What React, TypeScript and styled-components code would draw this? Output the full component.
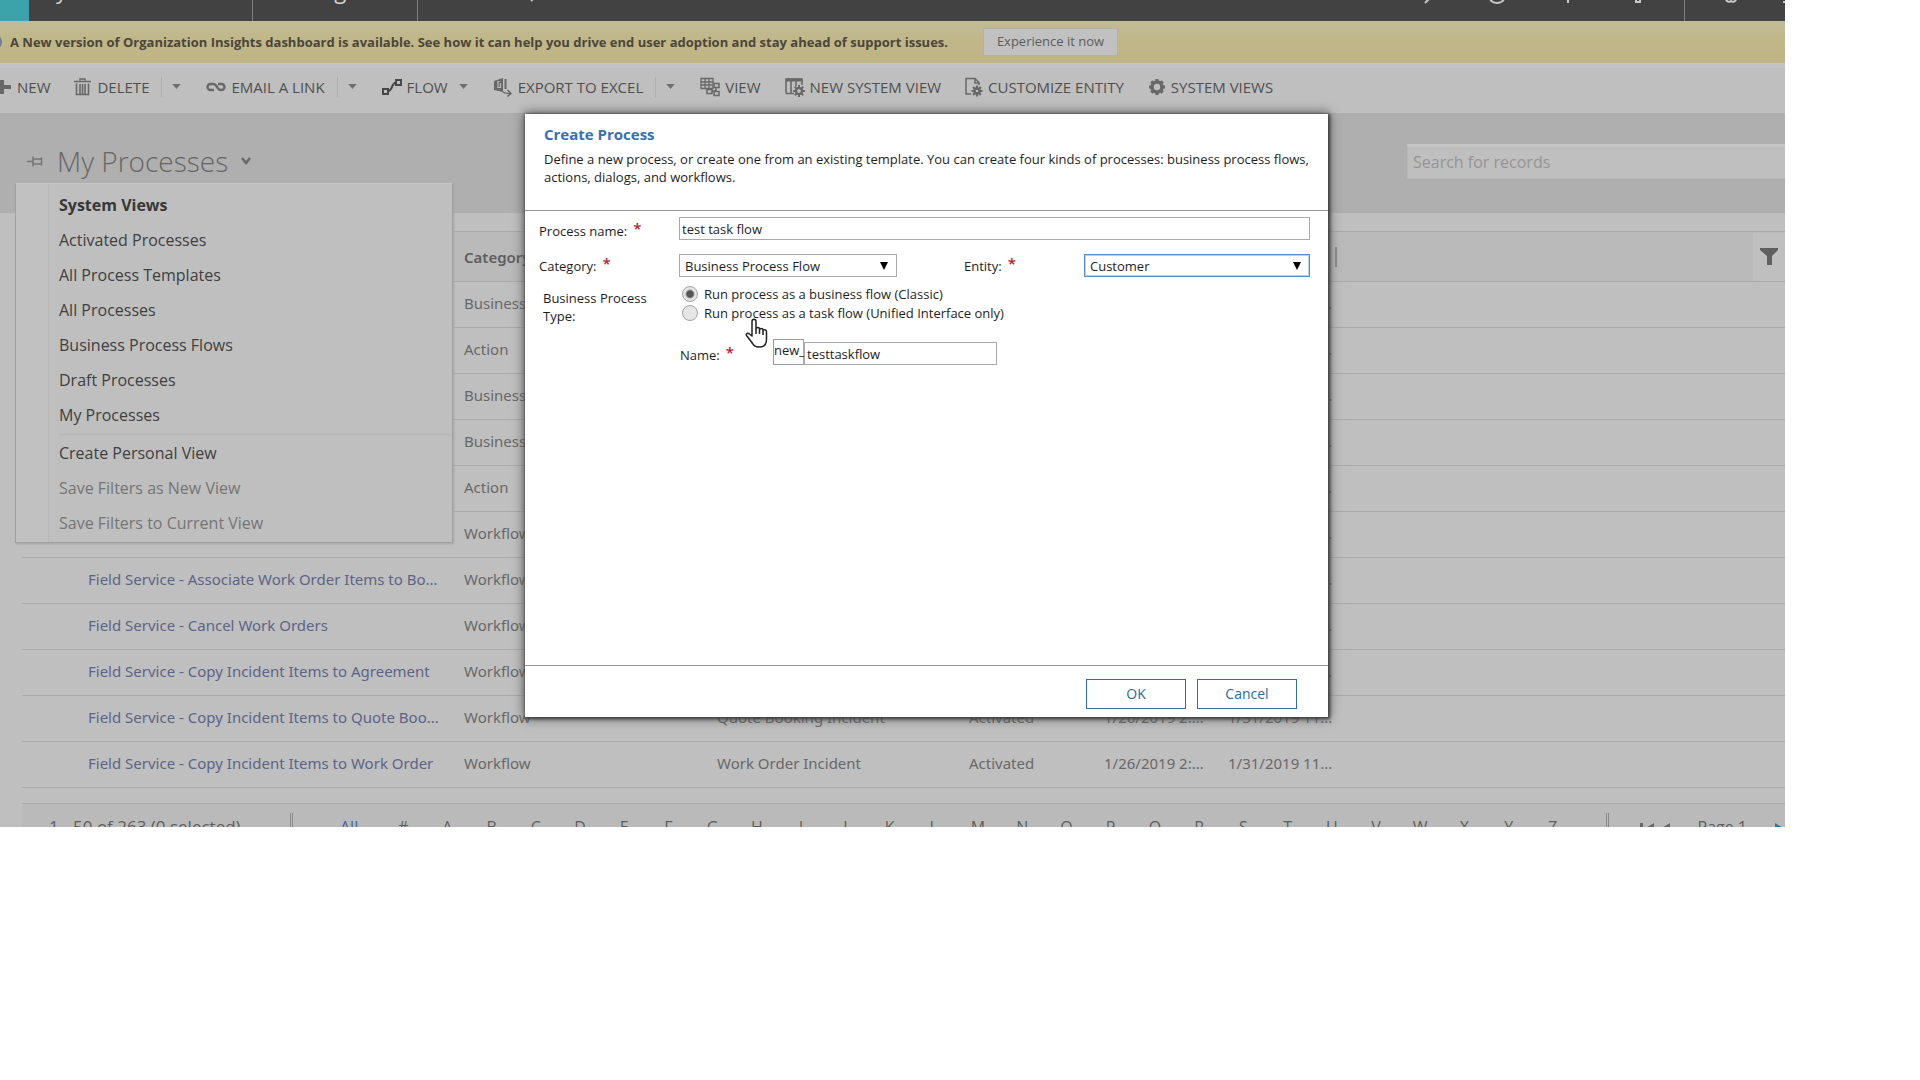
import React from "react";
import styled, { createGlobalStyle } from "styled-components";

const GlobalStyle = createGlobalStyle`
  *, *::before, *::after { box-sizing: border-box; }
  body { margin: 0; background: #fff; font-family: "Open Sans", "Noto Sans", sans-serif; }
  button, input, select { font: inherit; color: inherit; }
  a { text-decoration: none; }
`;

const Window = styled.div`
  position: relative;
  margin-right: 135px;
  overflow: hidden;
  background: #bfbfbf;
  color: #4c4c4c;
`;

/* ---------- top navigation ---------- */

const TopBar = styled.header`
  display: flex;
  height: 21px;
  overflow: hidden;
  background: #424242;
  color: #d4d4d4;
`;

const HomeTile = styled.a`
  width: 29px;
  background: #3ba3a9;
`;

const NavItem = styled.a<{ $width: number; $indent: number }>`
  width: ${(p) => p.$width}px;
  padding-left: ${(p) => p.$indent}px;
  border-right: 1px solid #808080;
  color: inherit;
  font-size: 22px;
  line-height: 24px;
`;

const NavText = styled.span`
  display: block;
  margin-top: -22px;
`;

const NavMore = styled.span`
  display: flex;
  padding-left: 105px;
`;

const NavTools = styled.div`
  display: flex;
  justify-content: space-between;
  width: 366px;
  margin-left: auto;
`;

const ToolGroup = styled.div<{ $width: number; $lined?: boolean }>`
  display: flex;
  justify-content: space-between;
  width: ${(p) => p.$width}px;
  padding-right: ${(p) => (p.$lined ? 38 : 0)}px;
  border-right: ${(p) => (p.$lined ? "1px solid #808080" : "0")};
`;

/* ---------- notification ---------- */

const Banner = styled.section`
  display: flex;
  align-items: center;
  gap: 35px;
  height: 42px;
  padding-left: 10px;
  background: linear-gradient(#c2bb98, #c0b787 45%, #c0b486);
  color: #4b463a;
  font-size: 13px;
  font-weight: 700;
`;

const InfoDot = styled.span`
  width: 16px;
  height: 16px;
  margin: 0 -27px 0 -24px;
  border: 2px solid #6f7c9c;
  border-radius: 50%;
`;

const BannerButton = styled.button`
  width: 135px;
  height: 28px;
  padding: 0 0 2px;
  border: 1px solid #b3b0a8;
  background: #c2c1c2;
  color: #5c5c5c;
  font-size: 13px;
  font-weight: 400;
`;

/* ---------- command bar ---------- */

const CommandBar = styled.nav`
  display: flex;
  align-items: center;
  gap: 24px;
  height: 50px;
  border-top: 5px solid #c4c4c6;
  padding-bottom: 8px;
`;

const Split = styled.div`
  display: flex;
  align-items: center;
`;

const Command = styled.button`
  display: flex;
  align-items: center;
  gap: 5px;
  padding: 0;
  border: 0;
  background: none;
  color: #4f4f4f;
  font-size: 15px;
  line-height: 20px;
  white-space: nowrap;
`;

const CaretButton = styled.button<{ $ruled: boolean }>`
  display: flex;
  align-items: center;
  height: 20px;
  margin-left: ${(p) => (p.$ruled ? 12 : 0)}px;
  padding: 0 1px 0 ${(p) => (p.$ruled ? 10 : 11)}px;
  border: 0;
  border-left: ${(p) => (p.$ruled ? "1px solid #adadad" : "0")};
  background: none;
  color: #6e6e6e;
`;

/* ---------- view header ---------- */

const ViewHeader = styled.div`
  position: relative;
  display: flex;
  align-items: center;
  justify-content: space-between;
  height: 100px;
  padding: 0 0 4px 26px;
  background: #afafaf;
`;

const ViewTitle = styled.h1`
  display: flex;
  align-items: center;
  gap: 12px;
  margin: 0;
  color: #666;
  font-size: 28px;
  font-weight: 300;
  line-height: 34px;
`;

const TitleButton = styled.button`
  display: flex;
  align-items: center;
  gap: 12px;
  padding: 0;
  border: 0;
  background: none;
`;

const Search = styled.input`
  width: 378px;
  height: 35px;
  padding: 0 5px;
  border: 1px solid #b8b8b8;
  border-top: 3px solid #c5c5c5;
  border-right: 0;
  background: #bfbfbf;
  font-size: 16px;
  &::placeholder { color: #959595; opacity: 1; }
`;

const ViewMenu = styled.ul`
  position: absolute;
  z-index: 1;
  top: 70px;
  left: 15px;
  width: 438px;
  margin: 0;
  padding: 4px 0 1px 43px;
  border: 1px solid #a0a0a0;
  border-top-color: #c6c6c6;
  background: linear-gradient(90deg, #c1c1c1 32px, #b9b9b9 32px, #b9b9b9 33px, #bfbfbf 33px);
  list-style: none;
  box-shadow: 1px 1px 2px #a4a4a4;
`;

const MenuHeading = styled.li`
  color: #383838;
  font-size: 16px;
  font-weight: 700;
  line-height: 35px;
`;

const MenuRow = styled.li<{ $ruled?: boolean }>`
  border-top: ${(p) => (p.$ruled ? "3px solid #bababa" : "0")};
`;

const MenuButton = styled.button`
  display: block;
  width: 100%;
  padding: 0;
  border: 0;
  background: none;
  color: #404040;
  font-size: 16px;
  line-height: 35px;
  text-align: left;
  &:disabled { color: #757575; }
`;

/* ---------- grid ---------- */

const GridArea = styled.main`
  padding: 18px 0 15px 22px;
`;

const Table = styled.table`
  width: 100%;
  border-collapse: collapse;
  table-layout: fixed;
  font-family: "Noto Sans", "Open Sans", sans-serif;
  font-size: 15px;
  color: #686868;
`;

const Col = styled.col<{ $width?: number }>`
  width: ${(p) => (p.$width ? `${p.$width}px` : "auto")};
`;

const HeadRow = styled.tr`
  height: 50px;
  background: #bababa;
  border-top: 1px solid #aaa;
  border-bottom: 1px solid #aaa;
`;

const HeadCell = styled.th`
  padding: 0;
  color: #5e5e5e;
  font-weight: 600;
  text-align: left;
`;

const ColumnEdge = styled.span`
  display: block;
  height: 20px;
  border-left: 2px solid #8c8c8c;
`;

const FilterButton = styled.button`
  display: flex;
  align-items: center;
  justify-content: center;
  width: 32px;
  height: 48px;
  padding: 0;
  border: 0;
  background: #bfbfbf;
`;

const Row = styled.tr`
  height: 46px;
  border-bottom: 1px solid #aaa;
`;

const Cell = styled.td`
  padding: 0 0 3px;
  white-space: nowrap;
`;

const RecordLink = styled.a`
  color: #5c6488;
`;

/* ---------- pager ---------- */

const Pager = styled.footer`
  display: flex;
  align-items: flex-start;
  height: 24px;
  margin-left: 22px;
  padding-top: 12px;
  overflow: hidden;
  border-top: 1px solid #aaa;
  background: #bababa;
  color: #5e5e5e;
  font-size: 16px;
  line-height: 22px;
`;

const Count = styled.span`
  width: 268px;
  padding-left: 27px;
  font-size: 17px;
  white-space: nowrap;
`;

const Divider = styled.span`
  width: 3px;
  height: 24px;
  margin-top: -3px;
  border: solid #8a8a8a;
  border-width: 0 1px;
`;

const AllLink = styled.a`
  width: 88px;
  padding-left: 47px;
  color: #3f66a0;
`;

const Letters = styled.div`
  display: grid;
  grid-template-columns: repeat(27, 1fr);
  flex: 1;
  padding-right: 31px;
`;

const Letter = styled.a`
  color: inherit;
  text-align: center;
`;

const PageNav = styled.div`
  display: flex;
  align-items: flex-start;
  width: 179px;
`;

const PageButton = styled.button<{ $gap: number }>`
  display: flex;
  padding: 7px 0 0;
  margin-left: ${(p) => p.$gap}px;
  border: 0;
  background: none;
`;

const PageLabel = styled.span`
  width: 79px;
  padding-left: 28px;
  white-space: nowrap;
`;

/* ---------- dialog ---------- */

const Scrim = styled.div`
  position: absolute;
  inset: 0;
  z-index: 2;
  padding: 114px 0 0 525px;
`;

const Dialog = styled.section`
  position: relative;
  display: flex;
  flex-direction: column;
  width: 803px;
  background: #fff;
  color: #1e1e1e;
  font-size: 13px;
  line-height: 18px;
  box-shadow: 1px 1px 3px 1px #3c3c3c, 0 0 11px 1px #5a5a5a;
`;

const DialogHead = styled.header`
  height: 97px;
  padding: 10px 12px 0 19px;
  border-bottom: 1px solid #999;
`;

const DialogTitle = styled.h2`
  margin: 0 0 6px;
  color: #3570b4;
  font-size: 15px;
  line-height: 20px;
`;

const DialogText = styled.p`
  margin: 0;
`;

const Form = styled.form`
  display: grid;
  grid-template-columns: 140px 218px 1fr 226px;
  grid-template-rows: 23px 23px 34px 26px;
  row-gap: 14px;
  height: 454px;
  padding: 6px 18px 0 14px;
`;

const Label = styled.label<{ $indent?: number; $low?: boolean }>`
  align-self: ${(p) => (p.$low ? "end" : "center")};
  padding-left: ${(p) => p.$indent ?? 0}px;
`;

const Star = styled.span`
  margin-left: 6px;
  color: #b5202c;
  font-size: 15px;
  font-weight: 600;
  line-height: 10px;
  vertical-align: 2px;
`;

const TextBox = styled.input<{ $wide?: boolean }>`
  grid-column: ${(p) => (p.$wide ? "2 / -1" : "auto")};
  width: ${(p) => (p.$wide ? "100%" : "193px")};
  height: 23px;
  padding: 0 2px;
  border: 1px solid #aaa;
  background: #fff;
`;

const SelectBox = styled.div`
  display: grid;
  grid-template-columns: 1fr 17px;
  align-items: center;
  height: 23px;
`;

const Select = styled.select<{ $active?: boolean }>`
  grid-area: 1 / 1 / 2 / 3;
  width: 100%;
  height: 23px;
  padding: 0 5px;
  border: 1px solid ${(p) => (p.$active ? "#5b8bc9" : "#aaa")};
  box-shadow: ${(p) => (p.$active ? "inset 0 0 0 1px #b9cfec" : "none")};
  border-radius: 0;
  background: #fff;
  appearance: none;
  outline: 0;
`;

const SelectArrow = styled.svg`
  grid-area: 1 / 2;
  width: 8px;
  height: 8px;
  pointer-events: none;
`;

const Caption = styled.span`
  width: 120px;
  margin-top: -2px;
  padding-left: 4px;
`;

const Choices = styled.div`
  grid-column: 2 / -1;
  margin-top: -7px;
  padding-left: 3px;
`;

const Choice = styled.label`
  display: flex;
  align-items: center;
  gap: 6px;
  height: 19px;
`;

const Radio = styled.input`
  appearance: none;
  width: 16px;
  height: 16px;
  margin: 0;
  border: 1px solid #a2a2a2;
  border-radius: 50%;
  background: #e6e6e6;
  &:checked {
    background: radial-gradient(circle, #555 0 3px, #e6e6e6 5px);
  }
`;

const NameRow = styled.div`
  grid-column: 2 / -1;
  display: flex;
  align-items: flex-end;
`;

const NameLabel = styled.label`
  width: 94px;
  padding: 0 0 1px 1px;
`;

const Prefix = styled.span`
  width: 31px;
  height: 26px;
  padding: 1px 0 0;
  border: 1px solid #8fa0b4;
  border-right-color: #aaa;
`;

const DialogFoot = styled.footer`
  display: flex;
  justify-content: flex-end;
  gap: 11px;
  padding: 13px 31px 8px 0;
  border-top: 1px solid #999;
`;

const DialogButton = styled.button`
  width: 100px;
  height: 30px;
  padding: 0;
  border: 1px solid #2f7099;
  background: #fff;
  color: #2a6a9a;
  font-size: 14px;
`;

const Pointer = styled.svg`
  position: absolute;
  top: 204px;
  left: 219px;
  width: 24px;
  height: 32px;
`;

/* ---------- icons ---------- */

const Caret = () => (
  <svg width="9" height="5" viewBox="0 0 10 6" aria-hidden="true">
    <path d="M0 0h10L5 6z" fill="currentColor" />
  </svg>
);

const Icon = ({ w = 20, children }: { w?: number; children: React.ReactNode }) => (
  <svg width={w} height="20" viewBox={`0 0 ${w} 20`} fill="none" stroke="#686868" strokeWidth="2" aria-hidden="true">
    {children}
  </svg>
);

const gearTeeth = (cx: number, cy: number, r: number) =>
  Array.from({ length: 8 }, (_, i) => {
    const a = (i * Math.PI) / 4;
    return `M${cx + Math.cos(a) * (r - 1)} ${cy + Math.sin(a) * (r - 1)}L${cx + Math.cos(a) * (r + 3)} ${cy + Math.sin(a) * (r + 3)}`;
  }).join("");

const Gear = ({ cx, cy, r, s }: { cx: number; cy: number; r: number; s: number }) => (
  <g>
    <circle cx={cx} cy={cy} r={r} strokeWidth={s} />
    <path d={gearTeeth(cx, cy, r)} strokeWidth={s * 0.9} />
  </g>
);

const PlusIcon = () => (
  <Icon w={12}><path d="M2 3v14M-5 10h16" strokeWidth="4" /></Icon>
);
const TrashIcon = () => (
  <Icon w={18}>
    <path d="M0 4.500h17M6 3.500V2h5v1.500" strokeWidth="1.500" />
    <path d="M2.500 6.500v11h12v-11M6 7v10M8.500 7v10M11 7v10" strokeWidth="1.600" />
  </Icon>
);
const LinkIcon = () => (
  <Icon>
    <path d="M8 13H4.500a3 3 0 0 1 0-6H7c2 0 3 1 4 3s2 3 4 3h.5a3 3 0 0 0 0-6H12" strokeWidth="2.400" />
  </Icon>
);
const FlowIcon = () => (
  <Icon>
    <path d="M1 12h5v5H1zM14 3h5v5h-5z" stroke="#484848" />
    <path d="M6 14c5 0 3-8 8-8.500" stroke="#484848" />
  </Icon>
);
const ExcelIcon = () => (
  <Icon>
    <path d="M1 4l9-3v14l-9-2z" fill="#686868" stroke="none" />
    <path d="M6.500 4.500H5v6h2.500V6" stroke="#bfbfbf" strokeWidth="1.200" />
    <path d="M12.500 2v10" strokeWidth="2" />
    <path d="M10 14.500c1 2 3 2 7 2M14.500 13l3.500 3.500-3.500 3" strokeWidth="1.500" />
  </Icon>
);
const ViewIcon = () => (
  <Icon>
    <path d="M1 1.500h12v10H1zM1 5h12M1 8h12M5 1v11M9 1v11" strokeWidth="1.300" />
    <path d="M14 6.500h5v4h-5zM14 14.500h5v4h-5zM7 12.500h5v4H7zM12 14h4v-4" strokeWidth="1.500" fill="#bfbfbf" />
  </Icon>
);
const NewViewIcon = () => (
  <Icon>
    <path d="M1 16.500V2h16v6M1 16.500h8M6 3v13M11 3v6" strokeWidth="1.600" />
    <path d="M1 3h16" strokeWidth="3" />
    <Gear cx={14} cy={14} r={3} s={2.2} />
  </Icon>
);
const CustomizeIcon = () => (
  <Icon w={18}>
    <path d="M6 17H1V1.500h9l4 4V8M10 1.500V6h4" strokeWidth="1.500" />
    <Gear cx={12} cy={14} r={2.5} s={2.4} />
  </Icon>
);
const GearIcon = () => (
  <Icon w={18}><Gear cx={9} cy={10} r={5} s={3.6} /></Icon>
);

const PinIcon = () => (
  <svg width="19" height="14" viewBox="0 0 19 14" fill="none" stroke="#767676" strokeWidth="1.500" aria-hidden="true">
    <path d="M1 7.500h6M7 2.500v10M7 5h8M7 10h8M15.500 3.500v8" />
  </svg>
);
const ChevronIcon = () => (
  <svg width="12" height="8" viewBox="0 0 12 8" fill="none" stroke="#686868" strokeWidth="2.500" aria-hidden="true">
    <path d="M2 1l4 5 4-5" />
  </svg>
);
const FunnelIcon = () => (
  <svg width="20" height="17" viewBox="0 0 20 17" fill="#606060" aria-hidden="true">
    <path d="M1 0h18v2l-6 6v9H8V8L1 2z" />
  </svg>
);

const BarGlyph = ({ d }: { d: string }) => (
  <svg width="16" height="6" viewBox="0 0 16 6" fill="none" stroke="#c8c8c8" strokeWidth="2" aria-hidden="true">
    <path d={d} />
  </svg>
);

/* ---------- data ---------- */

type CommandSpec = { label: string; icon: React.ReactNode; menu?: "split" | "plain" };

const commands: CommandSpec[] = [
  { label: "NEW", icon: <PlusIcon /> },
  { label: "DELETE", icon: <TrashIcon />, menu: "split" },
  { label: "EMAIL A LINK", icon: <LinkIcon />, menu: "split" },
  { label: "FLOW", icon: <FlowIcon />, menu: "plain" },
  { label: "EXPORT TO EXCEL", icon: <ExcelIcon />, menu: "split" },
  { label: "VIEW", icon: <ViewIcon /> },
  { label: "NEW SYSTEM VIEW", icon: <NewViewIcon /> },
  { label: "CUSTOMIZE ENTITY", icon: <CustomizeIcon /> },
  { label: "SYSTEM VIEWS", icon: <GearIcon /> },
];

const views = [
  "Activated Processes",
  "All Process Templates",
  "All Processes",
  "Business Process Flows",
  "Draft Processes",
  "My Processes",
];

type ProcessRecord = {
  name?: string;
  category: string;
  entity?: string;
  status?: string;
  created?: string;
  modified: string;
};

const modified = "1/31/2019 11...";

const records: ProcessRecord[] = [
  { category: "Business", modified },
  { category: "Action", modified },
  { category: "Business", modified },
  { category: "Business", modified },
  { category: "Action", modified },
  { category: "Workflow", modified },
  { name: "Field Service - Associate Work Order Items to Bo...", category: "Workflow", modified },
  { name: "Field Service - Cancel Work Orders", category: "Workflow", modified },
  { name: "Field Service - Copy Incident Items to Agreement", category: "Workflow", modified },
  {
    name: "Field Service - Copy Incident Items to Quote Boo...",
    category: "Workflow",
    entity: "Quote Booking Incident",
    status: "Activated",
    created: "1/26/2019 2:...",
    modified,
  },
  {
    name: "Field Service - Copy Incident Items to Work Order",
    category: "Workflow",
    entity: "Work Order Incident",
    status: "Activated",
    created: "1/26/2019 2:...",
    modified,
  },
];

const letters = ["#", ..."ABCDEFGHIJKLMNOPQRSTUVWXYZ"];

export default function App() {
  return (
    <>
      <GlobalStyle />
      <Window>
        <TopBar>
          <HomeTile href="#" aria-label="Home" />
          <NavItem href="#" $width={224} $indent={11}><NavText>Dynamics 365</NavText></NavItem>
          <NavItem href="#" $width={165} $indent={22}><NavText>Settings</NavText></NavItem>
          <NavMore><BarGlyph d="M10 -1l-2 2" /></NavMore>
          <NavTools>
            <ToolGroup $width={266} $lined>
              <BarGlyph d="M12 -3L6 3" />
              <BarGlyph d="M1 -2a7 5 0 0 0 14 0" />
              <BarGlyph d="M8 -3v6" />
              <BarGlyph d="M6 -2v4h4v-4" />
            </ToolGroup>
            <ToolGroup $width={62}>
              <BarGlyph d="M3 -1a3 3 0 0 0 5 2a3 3 0 0 0 5-2" />
              <BarGlyph d="M14 2h3" />
            </ToolGroup>
          </NavTools>
        </TopBar>

        <Banner>
          <InfoDot />
          <span>
            A New version of Organization Insights dashboard is available. See how it can help you drive end user
            adoption and stay ahead of support issues.
          </span>
          <BannerButton type="button">Experience it now</BannerButton>
        </Banner>

        <CommandBar>
          {commands.map((c) => (
            <Split key={c.label}>
              <Command type="button">{c.icon}{c.label}</Command>
              {c.menu && (
                <CaretButton type="button" $ruled={c.menu === "split"} aria-label={`${c.label} options`}>
                  <Caret />
                </CaretButton>
              )}
            </Split>
          ))}
        </CommandBar>

        <ViewHeader>
          <ViewTitle>
            <PinIcon />
            <TitleButton type="button">My Processes<ChevronIcon /></TitleButton>
          </ViewTitle>
          <Search type="search" placeholder="Search for records" aria-label="Search for records" />
          <ViewMenu>
            <MenuHeading>System Views</MenuHeading>
            {views.map((v) => (
              <MenuRow key={v}><MenuButton type="button">{v}</MenuButton></MenuRow>
            ))}
            <MenuRow $ruled><MenuButton type="button">Create Personal View</MenuButton></MenuRow>
            <MenuRow><MenuButton type="button" disabled>Save Filters as New View</MenuButton></MenuRow>
            <MenuRow><MenuButton type="button" disabled>Save Filters to Current View</MenuButton></MenuRow>
          </ViewMenu>
        </ViewHeader>

        <GridArea>
          <Table>
            <colgroup>
              <Col $width={66} />
              <Col $width={376} />
              <Col $width={253} />
              <Col $width={252} />
              <Col $width={135} />
              <Col $width={124} />
              <Col $width={107} />
              <Col />
              <Col $width={32} />
            </colgroup>
            <thead>
              <HeadRow>
                <HeadCell />
                <HeadCell />
                <HeadCell scope="col">Category</HeadCell>
                <HeadCell />
                <HeadCell />
                <HeadCell />
                <HeadCell />
                <HeadCell><ColumnEdge /></HeadCell>
                <HeadCell>
                  <FilterButton type="button" aria-label="Filter"><FunnelIcon /></FilterButton>
                </HeadCell>
              </HeadRow>
            </thead>
            <tbody>
              {records.map((r, i) => (
                <Row key={i}>
                  <Cell />
                  <Cell>{r.name && <RecordLink href="#">{r.name}</RecordLink>}</Cell>
                  <Cell>{r.category}</Cell>
                  <Cell>{r.entity}</Cell>
                  <Cell>{r.status}</Cell>
                  <Cell>{r.created}</Cell>
                  <Cell>{r.modified}</Cell>
                  <Cell colSpan={2} />
                </Row>
              ))}
            </tbody>
          </Table>
        </GridArea>

        <Pager>
          <Count>1 - 50 of 263 (0 selected)</Count>
          <Divider />
          <AllLink href="#">All</AllLink>
          <Letters>
            {letters.map((l) => <Letter key={l} href="#">{l}</Letter>)}
          </Letters>
          <PageNav>
            <Divider />
            <PageButton type="button" $gap={0} aria-label="First page">
              <svg width="46" height="12" viewBox="0 0 46 12" fill="#666"><path d="M31 0h3v12h-3zM45 0v12l-10-6z" /></svg>
            </PageButton>
            <PageButton type="button" $gap={5} aria-label="Previous page">
              <svg width="10" height="12" viewBox="0 0 10 12" fill="#666"><path d="M10 0v12L0 6z" /></svg>
            </PageButton>
            <PageLabel>Page 1</PageLabel>
            <PageButton type="button" $gap={28} aria-label="Next page">
              <svg width="10" height="12" viewBox="0 0 10 12" fill="#2f75a8"><path d="M0 0v12l10-6z" /></svg>
            </PageButton>
          </PageNav>
        </Pager>

        <Scrim>
          <Dialog role="dialog" aria-labelledby="dialog-title">
            <DialogHead>
              <DialogTitle id="dialog-title">Create Process</DialogTitle>
              <DialogText>
                Define a new process, or create one from an existing template. You can create four kinds of processes:
                business process flows, actions, dialogs, and workflows.
              </DialogText>
            </DialogHead>
            <Form>
              <Label htmlFor="process-name" $low>Process name:<Star>*</Star></Label>
              <TextBox id="process-name" $wide defaultValue="test task flow" />

              <Label htmlFor="category">Category:<Star>*</Star></Label>
              <SelectBox>
                <Select id="category"><option>Business Process Flow</option></Select>
                <SelectArrow viewBox="0 0 8 8"><path d="M0 0h8L4 8z" /></SelectArrow>
              </SelectBox>
              <Label htmlFor="entity" $indent={67}>Entity:<Star>*</Star></Label>
              <SelectBox>
                <Select id="entity" $active><option>Customer</option></Select>
                <SelectArrow viewBox="0 0 8 8"><path d="M0 0h8L4 8z" /></SelectArrow>
              </SelectBox>

              <Caption id="type-caption">Business Process Type:</Caption>
              <Choices role="radiogroup" aria-labelledby="type-caption">
                <Choice><Radio type="radio" name="type" defaultChecked />Run process as a business flow (Classic)</Choice>
                <Choice><Radio type="radio" name="type" />Run process as a task flow (Unified Interface only)</Choice>
              </Choices>

              <span />
              <NameRow>
                <NameLabel htmlFor="name">Name:<Star>*</Star></NameLabel>
                <Prefix>new_</Prefix>
                <TextBox id="name" defaultValue="testtaskflow" />
              </NameRow>
            </Form>
            <DialogFoot>
              <DialogButton type="button">OK</DialogButton>
              <DialogButton type="button">Cancel</DialogButton>
            </DialogFoot>
            <Pointer viewBox="0 0 24 32" aria-hidden="true">
              <path
                d="M8 18V3.500C8 .5 12 .5 12 3.500V11c0-2 3.500-2 3.500 0v1c0-2 3.500-2 3.500 0v1c0-2 3.500-1.500 3.500.5V21c0 5-2 8-7 8-5 0-6-2-8-5l-5-6.500c-1-2 1.500-3 3-1.500z"
                fill="#fff" stroke="#222" strokeWidth="1.500" strokeLinejoin="round"
              />
              <path d="M12 11v5M15.500 12v4M19 13v4" stroke="#222" strokeWidth="1.500" />
            </Pointer>
          </Dialog>
        </Scrim>
      </Window>
    </>
  );
}
